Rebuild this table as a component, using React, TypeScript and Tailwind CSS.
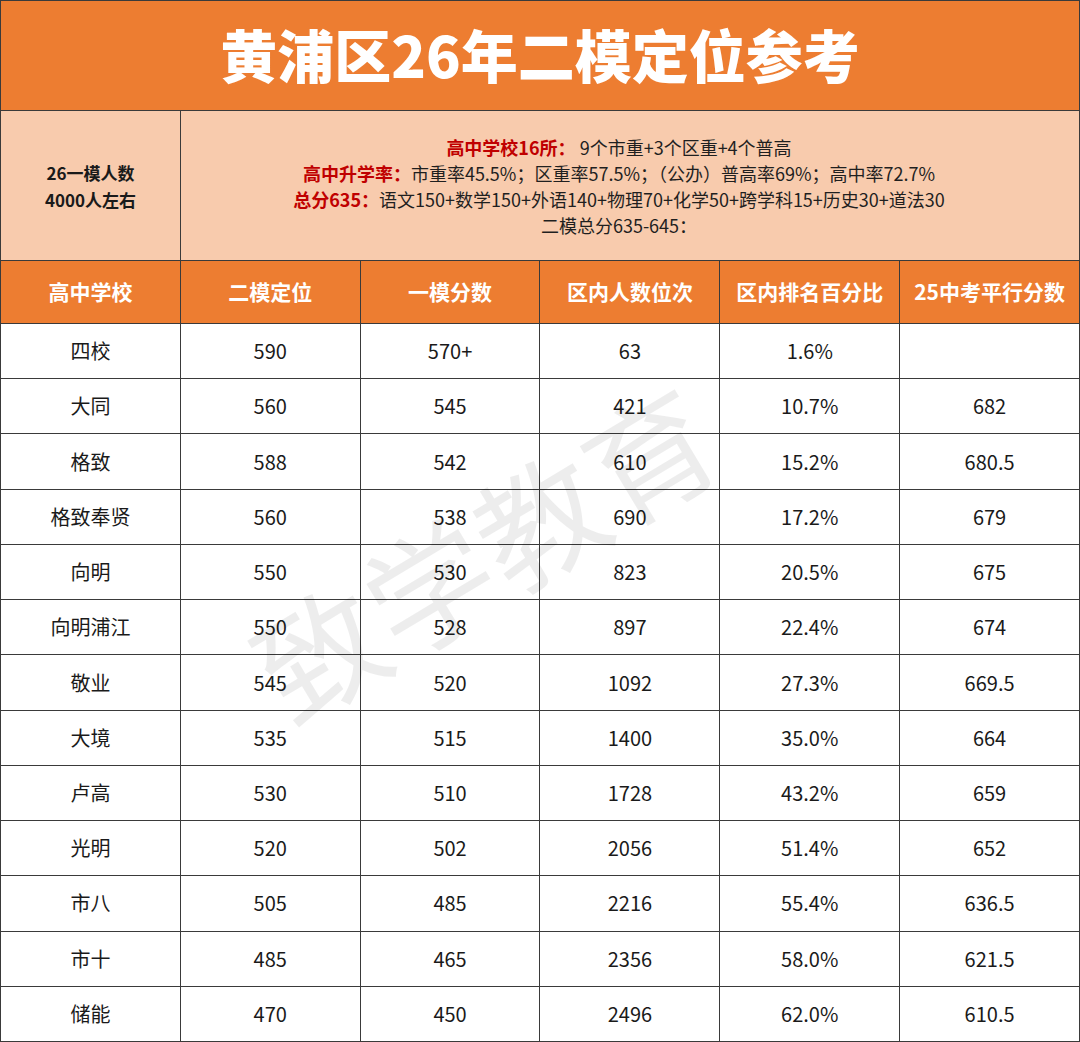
import React from "react";

const headers = ["高中学校", "二模定位", "一模分数", "区内人数位次", "区内排名百分比", "25中考平行分数"];

const rows = [
  ["四校", "590", "570+", "63", "1.6%", ""],
  ["大同", "560", "545", "421", "10.7%", "682"],
  ["格致", "588", "542", "610", "15.2%", "680.5"],
  ["格致奉贤", "560", "538", "690", "17.2%", "679"],
  ["向明", "550", "530", "823", "20.5%", "675"],
  ["向明浦江", "550", "528", "897", "22.4%", "674"],
  ["敬业", "545", "520", "1092", "27.3%", "669.5"],
  ["大境", "535", "515", "1400", "35.0%", "664"],
  ["卢高", "530", "510", "1728", "43.2%", "659"],
  ["光明", "520", "502", "2056", "51.4%", "652"],
  ["市八", "505", "485", "2216", "55.4%", "636.5"],
  ["市十", "485", "465", "2356", "58.0%", "621.5"],
  ["储能", "470", "450", "2496", "62.0%", "610.5"],
];

const font = { fontFamily: '"Noto Sans CJK SC", "Noto Sans", sans-serif' };

export default function App() {
  return (
    <div
      className="relative w-[1080px] h-[1042px] flex flex-col overflow-hidden bg-white border-l border-t border-[#3a3a3a]"
      style={font}
    >
      {/* Title */}
      <div className="h-[110px] shrink-0 flex items-center justify-center bg-[#ed7d31] border-b border-r border-[#3a3a3a]">
        <h1 className="text-[57px] font-black text-white leading-none pb-1">
          黄浦区26年二模定位参考
        </h1>
      </div>

      {/* Info */}
      <div className="h-[150px] shrink-0 flex bg-[#f8cbad] border-b border-[#3a3a3a]">
        <div className="w-[180px] shrink-0 flex flex-col items-center justify-center border-r border-[#3a3a3a] text-[17px] font-bold leading-[27px] text-[#1a1a1a]">
          <div>26一模人数</div>
          <div>4000人左右</div>
        </div>
        <div className="flex-1 flex flex-col items-center justify-center pr-[22px] border-r border-[#3a3a3a] text-[18px] leading-[26px] text-[#1f1f1f]">
          <div>
            <span className="font-bold text-[#c00000]">高中学校16所：</span> 9个市重+3个区重+4个普高
          </div>
          <div>
            <span className="font-bold text-[#c00000]">高中升学率：</span>市重率45.5%；区重率57.5%；（公办）普高率69%；高中率72.7%
          </div>
          <div>
            <span className="font-bold text-[#c00000]">总分635：</span>语文150+数学150+外语140+物理70+化学50+跨学科15+历史30+道法30
          </div>
          <div>二模总分635-645：</div>
        </div>
      </div>

      {/* Header row */}
      <div className="h-[63px] shrink-0 grid grid-cols-6 bg-[#ed7d31]">
        {headers.map((h) => (
          <div
            key={h}
            className="flex items-center justify-center border-r border-b border-[#3a3a3a] text-[21px] font-bold text-white"
          >
            {h}
          </div>
        ))}
      </div>

      {/* Body */}
      <div className="flex-1 flex flex-col">
        {rows.map((r, i) => (
          <div key={i} className="flex-1 grid grid-cols-6">
            {r.map((c, j) => (
              <div
                key={j}
                className="flex items-center justify-center border-r border-b border-[#3a3a3a] text-[20px] text-[#1a1a1a]"
              >
                {c}
              </div>
            ))}
          </div>
        ))}
      </div>

      {/* Watermark */}
      <div className="pointer-events-none absolute left-[482px] top-[548px] -translate-x-1/2 -translate-y-1/2 -rotate-[31deg] whitespace-nowrap text-[126px] leading-none tracking-[2px] text-black/[0.07]">
        致学教育
      </div>
    </div>
  );
}
